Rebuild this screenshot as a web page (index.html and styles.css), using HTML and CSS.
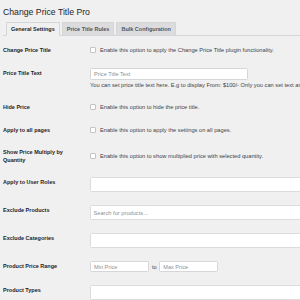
FILE: index.html
```html
<!DOCTYPE html>
<html>
<head>
<meta charset="utf-8">
<link rel="stylesheet" href="styles.css">
</head>
<body>
<div class="wrap">
  <h1 class="title">Change Price Title Pro</h1>
  <nav class="tabs">
    <span class="tab tab-active">General Settings</span>
    <span class="tab">Price Title Rules</span>
    <span class="tab">Bulk Configuration</span>
  </nav>
  <div class="form">
    <div class="row">
      <div class="label">Change Price Title</div>
      <div class="field field-check"><span class="checkbox"></span><span class="desc">Enable this option to apply the Change Price Title plugin functionality.</span></div>
    </div>
    <div class="row">
      <div class="label">Price Title Text</div>
      <div class="field">
        <div class="input input-wide">Price Title Text</div>
        <div class="desc desc-below">You can set price title text here. E.g to display From: $100/- Only you can set text and price will display after it.</div>
      </div>
    </div>
    <div class="row">
      <div class="label">Hide Price</div>
      <div class="field field-check"><span class="checkbox"></span><span class="desc">Enable this option to hide the price title.</span></div>
    </div>
    <div class="row">
      <div class="label">Apply to all pages</div>
      <div class="field field-check"><span class="checkbox"></span><span class="desc">Enable this option to apply the settings on all pages.</span></div>
    </div>
    <div class="row">
      <div class="label label-multi">Show Price Multiply by Quantity</div>
      <div class="field field-check field-tall"><span class="checkbox"></span><span class="desc">Enable this option to show multiplied price with selected quantity.</span></div>
    </div>
    <div class="row">
      <div class="label">Apply to User Roles</div>
      <div class="field"><div class="select"></div></div>
    </div>
    <div class="row">
      <div class="label">Exclude Products</div>
      <div class="field"><div class="select">Search for products...</div></div>
    </div>
    <div class="row">
      <div class="label">Exclude Categories</div>
      <div class="field"><div class="select"></div></div>
    </div>
    <div class="row">
      <div class="label">Product Price Range</div>
      <div class="field field-range">
        <div class="input input-small">Min Price</div>
        <span class="range-to">to</span>
        <div class="input input-small">Max Price</div>
      </div>
    </div>
    <div class="row">
      <div class="label">Product Types</div>
      <div class="field"><div class="select"></div></div>
    </div>
  </div>
</div>
</body>
</html>
```
FILE: styles.css
```css
html, body {
  margin: 0;
  padding: 0;
  background: #f0f0f1;
  overflow: hidden;
}
body {
  font-family: "Liberation Sans", Arial, sans-serif;
  color: #1d2327;
}
.wrap {
  width: 297px;
  height: 300px;
  padding-left: 3px;
  overflow: hidden;
}
.title {
  margin: 0;
  padding-top: 7px;
  font-size: 8.7px;
  line-height: 10px;
  font-weight: 400;
  color: #1d2327;
}
.tabs {
  display: flex;
  gap: 2px;
  margin-top: 5px;
  padding-left: 3px;
  height: 13px;
  border-bottom: 1px solid #d5d6d8;
}
.tab {
  box-sizing: border-box;
  height: 14px;
  padding: 0 4px;
  line-height: 12px;
  font-size: 5.5px;
  font-weight: 700;
  color: #50575e;
  background: #dcdcde;
  border: 1px solid #d5d6d8;
  white-space: nowrap;
}
.tab-active {
  background: #f0f0f1;
  color: #1d2327;
  border-bottom-color: #f0f0f1;
}
.form {
  margin-top: 4px;
}
.row {
  display: flex;
  padding: 5px 0 8px;
}
.label {
  width: 87px;
  flex: none;
  box-sizing: border-box;
  padding-top: 2px;
  padding-right: 6px;
  font-size: 5.5px;
  font-weight: 700;
  line-height: 7px;
  color: #1d2327;
}
.label-multi {
  padding-top: 0;
  line-height: 8px;
}
.field {
  flex: 1;
  min-width: 0;
}
.field-check {
  display: flex;
  align-items: center;
  height: 10px;
}
.field-tall {
  height: 16px;
}
.checkbox {
  box-sizing: border-box;
  width: 6px;
  height: 6px;
  flex: none;
  margin-right: 4px;
  background: #fff;
  border: 1px solid #c3c4c7;
  border-radius: 1px;
}
.desc {
  font-size: 5.7px;
  line-height: 7px;
  color: #3c434a;
  white-space: nowrap;
}
.desc-below {
  margin-top: 2px;
}
.input {
  box-sizing: border-box;
  height: 12px;
  display: flex;
  align-items: center;
  padding-left: 3px;
  background: #fff;
  border: 1px solid #d5d6d8;
  border-radius: 1.5px;
  font-size: 5.6px;
  color: #8c8f94;
  white-space: nowrap;
}
.input-wide {
  width: 158px;
}
.field-range {
  display: flex;
  align-items: center;
}
.input-small {
  width: 59px;
  height: 11px;
}
.range-to {
  margin: 0 2.5px 0 3px;
  font-size: 5.7px;
  color: #3c434a;
}
.select {
  box-sizing: border-box;
  width: 230px;
  height: 15px;
  display: flex;
  align-items: center;
  padding-left: 2.5px;
  background: #fff;
  border: 1px solid #dcdcde;
  border-radius: 1.5px;
  font-size: 5.7px;
  color: #8c8f94;
  white-space: nowrap;
}
```
